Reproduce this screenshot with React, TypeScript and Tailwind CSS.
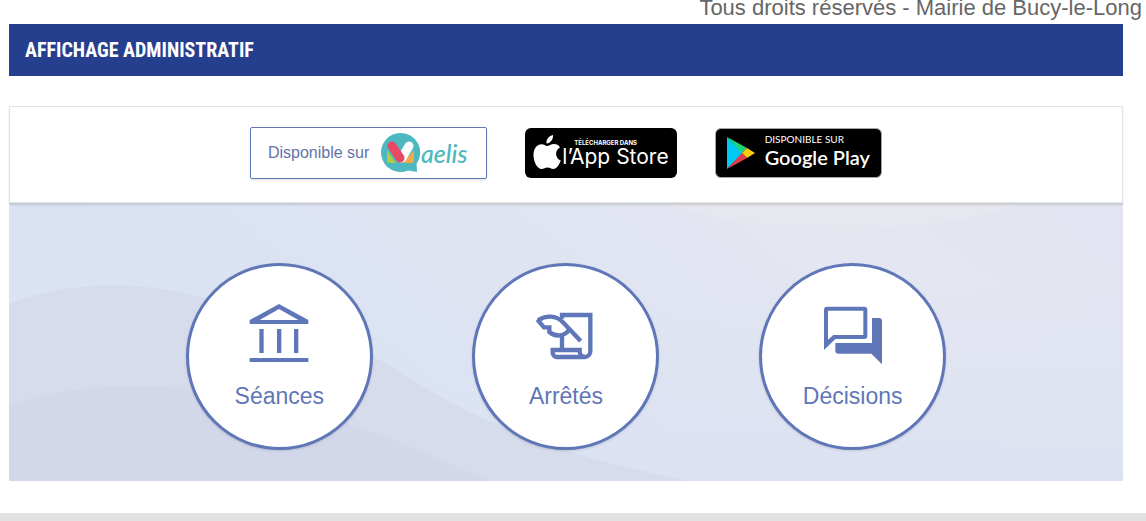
import React from 'react';

const SeancesIcon = () => (
  <svg className="size-16" viewBox="0 0 192 192" fill="currentColor" aria-hidden="true">
    <path
      fillRule="evenodd"
      d="M96 6 L184 54 V66 H8 V54 Z M96 21 L38 54 H154 Z"
    />
    <path d="M37 81h13v72h-13z M90 81h13v72h-13z M141 81h13v72h-13z M8 168h176v12h-176z" />
  </svg>
);

const ArretesIcon = () => (
  <svg
    className="size-16"
    viewBox="0 0 192 192"
    fill="none"
    stroke="currentColor"
    strokeWidth="13"
    aria-hidden="true"
  >
    <path d="M84 50 V39 H169 V148 A17 17 0 0 1 152 165 H69 A13 13 0 0 1 56 152 V144 H137 V148 A17 17 0 0 0 154 165" />
    <path d="M84 98 V144" />
    <path d="M12 55 C36 39 66 40 86 60 L140 117" />
    <path d="M10 53 L30 76 H46 V90 C62 104 85 104 100 90 L106 82" />
  </svg>
);

const DecisionsIcon = () => (
  <svg className="size-16" viewBox="0 0 192 192" fill="currentColor" aria-hidden="true">
    <path
      fillRule="evenodd"
      d="M18 14 H130 Q139 14 139 23 V102 Q139 111 130 111 H43 L9 144 V23 Q9 14 18 14 Z M21 26 V113 L37 99 H127 V26 Z"
    />
    <path d="M153 48 H174 Q183 48 183 57 V187 L151 155 H52 Q43 155 43 146 V123 H153 Z" />
  </svg>
);

const MaelisLogo = () => (
  <svg className="h-10 w-22" viewBox="0 0 88 40" role="img" aria-label="Maelis">
    <path
      d="M19.500 0 A19.500 19.500 0 1 0 27 37.500 L36 39 L35.500 31 A19.500 19.500 0 0 0 19.500 0 Z"
      fill="#4db8c0"
    />
    <path d="M6 17 L15 30 H8 Q6 30 6 28 Z" fill="#a9cf46" />
    <path d="M33 17 V28 Q33 30 31 30 H22 Z" fill="#f5a944" />
    <path d="M21 25 L28 13" stroke="#fff" strokeWidth="9" strokeLinecap="round" />
    <path d="M11 13 L19 25" stroke="#e84a66" strokeWidth="9" strokeLinecap="round" />
    <text
      x="40"
      y="30"
      fill="#4db8c0"
      fontFamily="Lato, sans-serif"
      fontStyle="italic"
      fontWeight="500"
      fontSize="25"
    >
      aelis
    </text>
  </svg>
);

const AppleLogo = () => (
  <svg className="h-9 w-7 shrink-0" viewBox="0 0 28 36" fill="#fff" aria-hidden="true">
    <path d="M20 0 C20.500 4 17.500 8.500 13.500 8.500 C13 4.500 16 0.800 20 0 Z" />
    <path d="M14 11 C16 11 18 9 21 9 C23.500 9 25.500 10.200 27 12.200 C21.500 15.500 22 23 27.800 25.500 C26 30 23.500 34 20.500 34 C18 34 17 32.600 14.500 32.600 C12 32.600 11 34 8.500 34 C4.500 34 0.500 27 0.500 20 C0.500 13 4.500 9.300 8.500 9.300 C11 9.300 12.500 11 14 11 Z" />
  </svg>
);

const PlayLogo = () => (
  <svg className="h-8 w-7 shrink-0" viewBox="0 0 28 32" aria-hidden="true">
    <path d="M0 0 L16 16 L0 32 Z" fill="#00c8f5" />
    <path d="M0 0 L20 11 L15 16 Z" fill="#1ed47b" />
    <path d="M0 32 L20 21 L15 16 Z" fill="#e53b4b" />
    <path d="M20 11 L28 16 L20 21 L15 16 Z" fill="#fccb0f" />
  </svg>
);

const categories = [
  { id: 1, name: 'Séances', icon: <SeancesIcon /> },
  { id: 2, name: 'Arrêtés', icon: <ArretesIcon /> },
  { id: 3, name: 'Décisions', icon: <DecisionsIcon /> },
];

const App = () => {
  return (
    <div className="bg-white font-['Liberation_Sans',Arial,sans-serif]">
      <p className="pb-2 pr-1 text-right text-[22px] leading-4 text-[#666]">
        Tous droits réservés - Mairie de Bucy-le-Long
      </p>

      <main className="ml-[9px] mr-[23px]">
        <h1 className="bg-[#253f8e] px-4 text-[20px] font-bold leading-[52px] text-white font-['Roboto_Condensed','Liberation_Sans_Narrow',sans-serif]">
          AFFICHAGE ADMINISTRATIF
        </h1>

        {/* Store links */}
        <section className="relative z-10 mt-[30px] flex flex-wrap items-center justify-center gap-[38px] border border-[#e4e4e4] bg-white pb-[23px] pt-5 shadow-[0_2px_2px_rgba(0,0,0,0.12)]">
          <a
            href="#maelis"
            className="flex h-[52px] items-center gap-3 rounded-xs border border-[#5f76b8] px-[17px] text-base text-[#6273a8] shadow-sm"
          >
            Disponible sur
            <MaelisLogo />
          </a>
          <a
            href="#app-store"
            className="flex h-[50px] items-center gap-px rounded-md bg-black px-2 text-white"
          >
            <AppleLogo />
            <span className="flex flex-col whitespace-nowrap font-['Inter',sans-serif]">
              <span className="pl-3 text-[6px] font-bold leading-2">TÉLÉCHARGER DANS</span>
              <span className="text-[21px] leading-5">l’App Store</span>
            </span>
          </a>
          <a
            href="#google-play"
            className="flex h-[50px] items-center gap-[10px] rounded-md border border-[#a6a6a6] bg-black px-[11px] text-white"
          >
            <PlayLogo />
            <span className="flex flex-col whitespace-nowrap pb-1 font-['Lato',sans-serif]">
              <span className="text-[10px] leading-3">DISPONIBLE SUR</span>
              <span className="text-[20px] font-semibold leading-6">Google Play</span>
            </span>
          </a>
        </section>

        {/* Categories */}
        <section className="relative overflow-hidden bg-[#dde3f2] pb-[31px] pt-[60px]">
          <svg
            className="absolute inset-0 h-full w-full"
            viewBox="0 0 1114 278"
            preserveAspectRatio="none"
            aria-hidden="true"
          >
            <defs>
              <linearGradient id="sky" x1="0" y1="0.3" x2="1" y2="0">
                <stop offset="0" stopColor="#dae3f2" />
                <stop offset="0.3" stopColor="#dce3f2" />
                <stop offset="0.7" stopColor="#e4e6f1" />
                <stop offset="1" stopColor="#e2e5f1" />
              </linearGradient>
              <linearGradient id="fade" x1="0" y1="0" x2="0" y2="1">
                <stop offset="0.3" stopColor="#dce3f2" stopOpacity="0" />
                <stop offset="1" stopColor="#dce2f2" />
              </linearGradient>
            </defs>
            <path d="M0 0H1114V278H0Z" fill="url(#sky)" />
            <path d="M660 0 C740 34 920 36 1010 0 Z" fill="#e6e8ef" />
            <path d="M0 0H1114V278H0Z" fill="url(#fade)" />
            <path d="M0 101 C60 76 150 76 220 103 C300 126 350 140 400 175 C480 225 560 255 682 278 H0 Z" fill="#d7dced" />
            <path d="M0 202 C70 178 150 178 230 192 C340 215 390 238 480 278 H0 Z" fill="#d2d7ea" />
          </svg>

          <div className="relative mx-auto grid max-w-[860px] grid-cols-3">
            {categories.map((category) => (
              <a
                key={category.id}
                href={`#categorie-${category.id}`}
                className="mx-auto flex size-[187px] flex-col items-center rounded-full border-3 border-[#5f76b8] bg-white pt-9 text-[#5f76b8] shadow-sm"
              >
                {category.icon}
                <span className="mt-3.5 text-[23px] leading-8">{category.name}</span>
              </a>
            ))}
          </div>
        </section>
      </main>

      <footer className="mt-8 h-2 bg-[#e2e2e2]" />
    </div>
  );
};

export default App;
